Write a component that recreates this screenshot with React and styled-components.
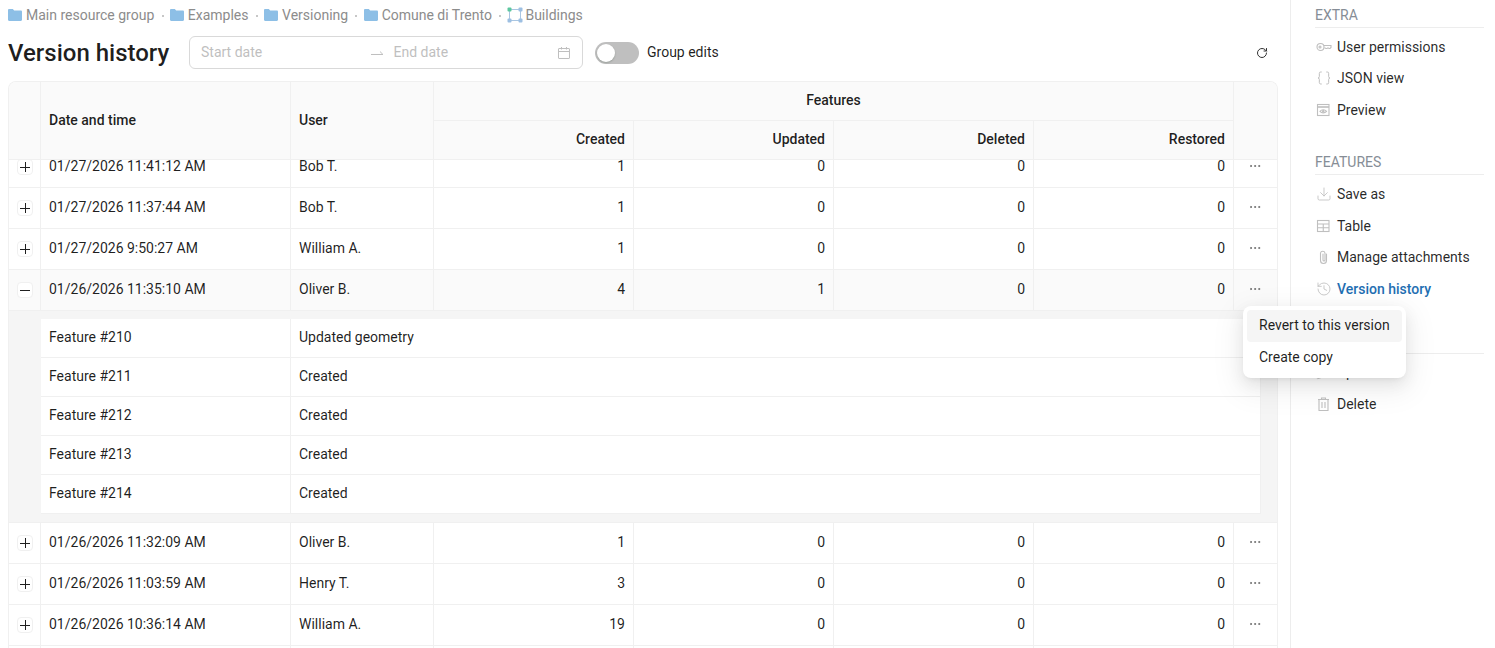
import React from "react";
import styled, { createGlobalStyle } from "styled-components";
import { Braces, Download, History, Pencil, RotateCw, Ellipsis, ListTree } from "lucide-react";

const GlobalStyle = createGlobalStyle`
  html, body { margin: 0; padding: 0; background: #fff; }
  body { font-family: Roboto, "Liberation Sans", sans-serif; font-size: 14px; color: rgba(0,0,0,.88); }
  * { box-sizing: border-box; }
`;

const Page = styled.div`
  position: relative;
  display: flex;
  width: 1495px;
  height: 648px;
  overflow: hidden;
`;
const Main = styled.main`
  width: 1291px;
  flex: none;
  padding: 0 12px 0 8px;
  border-right: 1px solid #ededed;
  display: flex;
  flex-direction: column;
  min-height: 0;
`;
const Crumbs = styled.nav`
  height: 36px;
  padding-top: 4px;
  display: flex;
  align-items: flex-start;
  line-height: 22px;
  color: #8c8c8c;
`;
const Crumb = styled.span`
  display: inline-flex;
  align-items: center;
  gap: ${p => p.$gap || 4}px;
`;
const CrumbSep = styled.span`
  width: 15.5px;
  display: inline-flex;
  justify-content: center;
  align-items: center;
  height: 22px;
  &::before {
    content: "";
    width: 2px;
    height: 2px;
    margin-top: 2px;
    margin-left: 1px;
    border-radius: 50%;
    background: #b5b5b5;
  }
`;
const TitleRow = styled.header`
  height: 33px;
  margin-bottom: 12px;
  display: flex;
  align-items: center;
`;
const Title = styled.h1`
  margin: 0 20px 0 0;
  padding-top: 2px;
  width: 161px;
  font-size: 24px;
  line-height: 33px;
  font-weight: 500;
  white-space: nowrap;
  color: rgba(0,0,0,.88);
`;
const RangePicker = styled.div`
  width: 394px;
  height: 33px;
  padding: 0 11px;
  border: 1px solid #d9d9d9;
  border-radius: 6px;
  display: flex;
  align-items: center;
  color: #bfbfbf;
`;
const DateSlot = styled.span`
  width: ${p => p.$w}px;
  margin-left: ${p => p.$ml || 0}px;
  padding-bottom: 2px;
`;
const Switch = styled.span`
  width: 44px;
  height: 22px;
  margin-left: 12px;
  border-radius: 11px;
  background: #bfbfbf;
  padding: 2px;
  display: flex;
  &::before {
    content: "";
    width: 18px;
    height: 18px;
    border-radius: 50%;
    background: #fff;
    box-shadow: 0 1px 2px rgba(0,35,11,.2);
  }
`;
const SwitchLabel = styled.span`
  margin-left: 8px;
  padding-bottom: 2px;
`;
const Refresh = styled.button`
  margin-left: auto;
  width: 32px;
  height: 32px;
  padding: 0;
  border: 0;
  background: none;
  display: flex;
  align-items: center;
  justify-content: center;
  color: #333;
`;

const COLS = "32px 250px 143px 200px 200px 200px 200px 43px";

const Table = styled.section`
  flex: 1;
  min-height: 0;
  overflow: hidden;
  border: 1px solid #f0f0f0;
  border-bottom: 0;
  border-radius: 8px 8px 0 0;
  display: flex;
  flex-direction: column;
`;
const HeadGrid = styled.div`
  flex: none;
  display: grid;
  grid-template-columns: ${COLS};
  grid-template-rows: 39px 38px;
  background: #fafafa;
  border-bottom: 1px solid #f0f0f0;
`;
const HeadCell = styled.div`
  grid-column: ${p => p.$col};
  grid-row: ${p => p.$row};
  padding: 0 8px 2px;
  display: flex;
  align-items: center;
  justify-content: ${p => p.$align || "flex-start"};
  font-weight: 500;
  line-height: 22px;
  border-right: ${p => (p.$last ? "0" : "1px solid #f0f0f0")};
  border-bottom: ${p => (p.$line ? "1px solid #f0f0f0" : "0")};
`;
const Body = styled.div`
  flex: 1;
  min-height: 0;
  overflow: hidden;
`;
const Scroller = styled.div`
  margin-top: -13px;
`;
const Row = styled.div`
  display: grid;
  grid-template-columns: ${COLS};
  height: 41px;
  border-bottom: 1px solid #f0f0f0;
  background: ${p => (p.$open ? "#fafafa" : "#fff")};
`;
const Cell = styled.div`
  padding: 0 8px 3px;
  display: flex;
  align-items: center;
  justify-content: ${p => (p.$num ? "flex-end" : "flex-start")};
  border-right: 1px solid #f0f0f0;
  white-space: nowrap;
`;
const ExpandCell = styled(Cell)`
  padding: 0 0 0 1px;
  justify-content: center;
`;
const ActionCell = styled.div`
  display: flex;
  align-items: center;
  justify-content: center;
  padding: 0 1px 2px 0;
  color: #666;
`;
const ExpandButton = styled.button`
  position: relative;
  width: 16px;
  height: 16px;
  padding: 0;
  background: #fff;
  border: 1px solid #f0f0f0;
  border-radius: 4px;
  &::before {
    content: "";
    position: absolute;
    left: 2px;
    right: 2px;
    top: 6.5px;
    height: 1px;
    background: #1f1f1f;
  }
  &::after {
    content: "";
    position: absolute;
    top: 2px;
    bottom: 2px;
    left: 6.5px;
    width: 1px;
    background: #1f1f1f;
    display: ${p => (p.$open ? "none" : "block")};
  }
`;
const Panel = styled.div`
  background: #f5f5f5;
  height: 212px;
  padding: 8px 16px 8px 32px;
  border-bottom: 1px solid #f0f0f0;
`;
const Detail = styled.div`
  background: #fff;
`;
const DetailRow = styled.div`
  display: grid;
  grid-template-columns: 250px 1fr;
  height: 39px;
  border-bottom: 1px solid #f0f0f0;
`;
const DetailCell = styled.div`
  padding: 0 8px 3px;
  display: flex;
  align-items: center;
  border-right: 1px solid #f0f0f0;
`;

const Side = styled.aside`
  flex: 1;
  padding: 0 11px 0 24px;
  min-width: 0;
`;
const SideHeading = styled.h2`
  margin: 0;
  height: 28px;
  padding-top: 5px;
  line-height: 20px;
  font-size: 14px;
  font-weight: 400;
  color: #868d96;
  border-bottom: 1px solid #ededed;
`;
const SideList = styled.ul`
  list-style: none;
  margin: 0 0 ${p => p.$gap || 21}px;
  padding: ${p => p.$top || 3.2}px 0 0;
`;
const SideItem = styled.li`
  height: 31.5px;
  display: flex;
  align-items: center;
  gap: 5px;
  padding-left: 1px;
  color: ${p => (p.$active ? "#1f6fb2" : "rgba(0,0,0,.85)")};
  font-weight: ${p => (p.$active ? 500 : 400)};
  svg { color: #bfbfbf; flex: none; }
`;
const Divider = styled.hr`
  margin: 0;
  border: 0;
  border-top: 1px solid #ededed;
`;

const Menu = styled.div`
  position: absolute;
  left: 1243px;
  top: 306px;
  width: 163px;
  padding: 4px;
  background: #fff;
  border-radius: 8px;
  box-shadow: 0 6px 16px rgba(0,0,0,.08), 0 3px 6px -4px rgba(0,0,0,.12), 0 9px 28px 8px rgba(0,0,0,.05);
`;
const MenuItem = styled.div`
  height: 32px;
  padding: 0 12px 2px;
  display: flex;
  align-items: center;
  border-radius: 4px;
  background: ${p => (p.$hover ? "#f5f5f5" : "transparent")};
  white-space: nowrap;
`;

const Folder = () => (
  <svg width="14" height="12" viewBox="0 0 14 12">
    <path d="M0 1.2C0 .6.5 0 1.2 0h3.6l1.4 1.6h6.6c.7 0 1.2.5 1.2 1.2v8c0 .7-.5 1.2-1.2 1.2H1.2C.5 12 0 11.500 0 10.800z" fill="#8dbfe6" />
  </svg>
);
const LayerIcon = () => (
  <svg width="16" height="16" viewBox="0 0 16 16" fill="none">
    <path d="M3 2.500H13M2.500 3V13M13.500 3V13M3 13.500H13" stroke="#a9c6e2" strokeWidth="1" />
    <rect x="0.500" y="0.500" width="4" height="4" rx="1" fill="#5cc79f" />
    <rect x="11.500" y="0.500" width="4" height="4" rx="1" fill="#9dbfe2" />
    <rect x="0.500" y="11.500" width="4" height="4" rx="1" fill="#9dbfe2" />
    <rect x="11.500" y="11.500" width="4" height="4" rx="1" fill="#9dbfe2" />
  </svg>
);
const SwapArrow = () => (
  <svg width="16" height="8" viewBox="0 0 16 8" fill="none" stroke="#bfbfbf" strokeWidth="1">
    <path d="M2 5.500H14L11 2.500" />
  </svg>
);
const CalendarIcon = () => (
  <svg width="14" height="14" viewBox="0 0 14 14" fill="none" stroke="#bfbfbf" strokeWidth="1">
    <rect x="1.500" y="2.500" width="11" height="10" rx=".5" />
    <path d="M1.500 5.500H12.500M4.500 1V3.500M9.500 1V3.500" />
  </svg>
);
const KeyIcon = () => (
  <svg width="16" height="16" viewBox="0 0 16 16" fill="none" stroke="currentColor" strokeWidth="1.100">
    <circle cx="4.500" cy="8" r="3.500" />
    <path d="M8 6.500H15V8.500L14 9.500H13L12 8.800L11 9.500H10L8.500 8.800" />
    <circle cx="4" cy="8" r="1" />
  </svg>
);
const PreviewIcon = () => (
  <svg width="16" height="16" viewBox="0 0 16 16" fill="none" stroke="currentColor" strokeWidth="1.100">
    <rect x="1.500" y="2.500" width="11.500" height="11" />
    <path d="M1.500 5H13" strokeWidth="1.600" />
    <path d="M4 9.300C5.700 7.200 8.800 7.200 10.500 9.300C8.800 11.400 5.700 11.400 4 9.300Z" />
    <circle cx="7.250" cy="9.300" r=".7" />
  </svg>
);
const TableIcon = () => (
  <svg width="16" height="16" viewBox="0 0 16 16" fill="none" stroke="currentColor" strokeWidth="1.100">
    <rect x="1.500" y="2.500" width="11.500" height="11" />
    <path d="M1.500 6H13M1.500 9.800H13M7.250 6V13.500" />
  </svg>
);
const ClipIcon = () => (
  <svg width="16" height="16" viewBox="0 0 16 16" fill="none" stroke="currentColor" strokeWidth="1.100" strokeLinecap="round">
    <path d="M10.500 5V11.500A3 3 0 0 1 4.500 11.500V4A2.300 2.300 0 0 1 9 4V11A1 1 0 0 1 7 11V5" />
  </svg>
);
const TrashIcon = () => (
  <svg width="16" height="16" viewBox="0 0 16 16" fill="none" stroke="currentColor" strokeWidth="1.100">
    <path d="M2 3.500H13M3 3.500V14.500H12V3.500M5.500 3.500V2H9.500V3.500M6 6V12M9 6V12" />
  </svg>
);

const crumbs = ["Main resource group", "Examples", "Versioning", "Comune di Trento"];
const rowsTop = [
  ["01/27/2026 11:41:12 AM", "Bob T.", 1, 0, 0, 0],
  ["01/27/2026 11:37:44 AM", "Bob T.", 1, 0, 0, 0],
  ["01/27/2026 9:50:27 AM", "William A.", 1, 0, 0, 0],
];
const openRow = ["01/26/2026 11:35:10 AM", "Oliver B.", 4, 1, 0, 0];
const rowsBottom = [
  ["01/26/2026 11:32:09 AM", "Oliver B.", 1, 0, 0, 0],
  ["01/26/2026 11:03:59 AM", "Henry T.", 3, 0, 0, 0],
  ["01/26/2026 10:36:14 AM", "William A.", 19, 0, 0, 0],
  ["01/26/2026 10:12:31 AM", "Henry T.", 2, 0, 0, 0],
];
const details = [
  ["Feature #210", "Updated geometry"],
  ["Feature #211", "Created"],
  ["Feature #212", "Created"],
  ["Feature #213", "Created"],
  ["Feature #214", "Created"],
];

const DataRow = ({ data, open }) => (
  <Row $open={open}>
    <ExpandCell><ExpandButton $open={open} aria-label={open ? "Collapse" : "Expand"} /></ExpandCell>
    <Cell>{data[0]}</Cell>
    <Cell>{data[1]}</Cell>
    {data.slice(2).map((n, i) => <Cell $num key={i}>{n}</Cell>)}
    <ActionCell><Ellipsis size={14} strokeWidth={1.5} /></ActionCell>
  </Row>
);

const lucideProps = { size: 16, strokeWidth: 1.25 };

export default function App() {
  return (
    <Page>
      <GlobalStyle />
      <Main>
        <Crumbs>
          {crumbs.map(c => (
            <React.Fragment key={c}>
              <Crumb><Folder />{c}</Crumb>
              <CrumbSep />
            </React.Fragment>
          ))}
          <Crumb $gap={2}><LayerIcon />Buildings</Crumb>
        </Crumbs>
        <TitleRow>
          <Title>Version history</Title>
          <RangePicker>
            <DateSlot $w={168}>Start date</DateSlot>
            <SwapArrow />
            <DateSlot $w={164} $ml={9}>End date</DateSlot>
            <CalendarIcon />
          </RangePicker>
          <Switch />
          <SwitchLabel>Group edits</SwitchLabel>
          <Refresh aria-label="Refresh"><RotateCw size={12} strokeWidth={2} /></Refresh>
        </TitleRow>
        <Table>
          <HeadGrid>
            <HeadCell $col="1" $row="1 / 3" />
            <HeadCell $col="2" $row="1 / 3">Date and time</HeadCell>
            <HeadCell $col="3" $row="1 / 3">User</HeadCell>
            <HeadCell $col="4 / 8" $row="1" $align="center" $line>Features</HeadCell>
            <HeadCell $col="4" $row="2" $align="flex-end">Created</HeadCell>
            <HeadCell $col="5" $row="2" $align="flex-end">Updated</HeadCell>
            <HeadCell $col="6" $row="2" $align="flex-end">Deleted</HeadCell>
            <HeadCell $col="7" $row="2" $align="flex-end">Restored</HeadCell>
            <HeadCell $col="8" $row="1 / 3" $last />
          </HeadGrid>
          <Body>
            <Scroller>
              {rowsTop.map(r => <DataRow key={r[0]} data={r} />)}
              <DataRow data={openRow} open />
              <Panel>
                <Detail>
                  {details.map(d => (
                    <DetailRow key={d[0]}>
                      <DetailCell>{d[0]}</DetailCell>
                      <DetailCell>{d[1]}</DetailCell>
                    </DetailRow>
                  ))}
                </Detail>
              </Panel>
              {rowsBottom.map(r => <DataRow key={r[0]} data={r} />)}
            </Scroller>
          </Body>
        </Table>
      </Main>
      <Side>
        <SideHeading>EXTRA</SideHeading>
        <SideList>
          <SideItem><KeyIcon />User permissions</SideItem>
          <SideItem><Braces size={16} strokeWidth={1.5} />JSON view</SideItem>
          <SideItem><PreviewIcon />Preview</SideItem>
        </SideList>
        <SideHeading>FEATURES</SideHeading>
        <SideList $gap={16.7} $top={3.8}>
          <SideItem><Download {...lucideProps} />Save as</SideItem>
          <SideItem><TableIcon />Table</SideItem>
          <SideItem><ClipIcon />Manage attachments</SideItem>
          <SideItem $active><History {...lucideProps} />Version history</SideItem>
          <SideItem><ListTree {...lucideProps} />Fields</SideItem>
        </SideList>
        <Divider />
        <SideList $top={2.7}>
          <SideItem><Pencil {...lucideProps} />Update</SideItem>
          <SideItem><TrashIcon />Delete</SideItem>
        </SideList>
      </Side>
      <Menu>
        <MenuItem $hover>Revert to this version</MenuItem>
        <MenuItem>Create copy</MenuItem>
      </Menu>
    </Page>
  );
}
